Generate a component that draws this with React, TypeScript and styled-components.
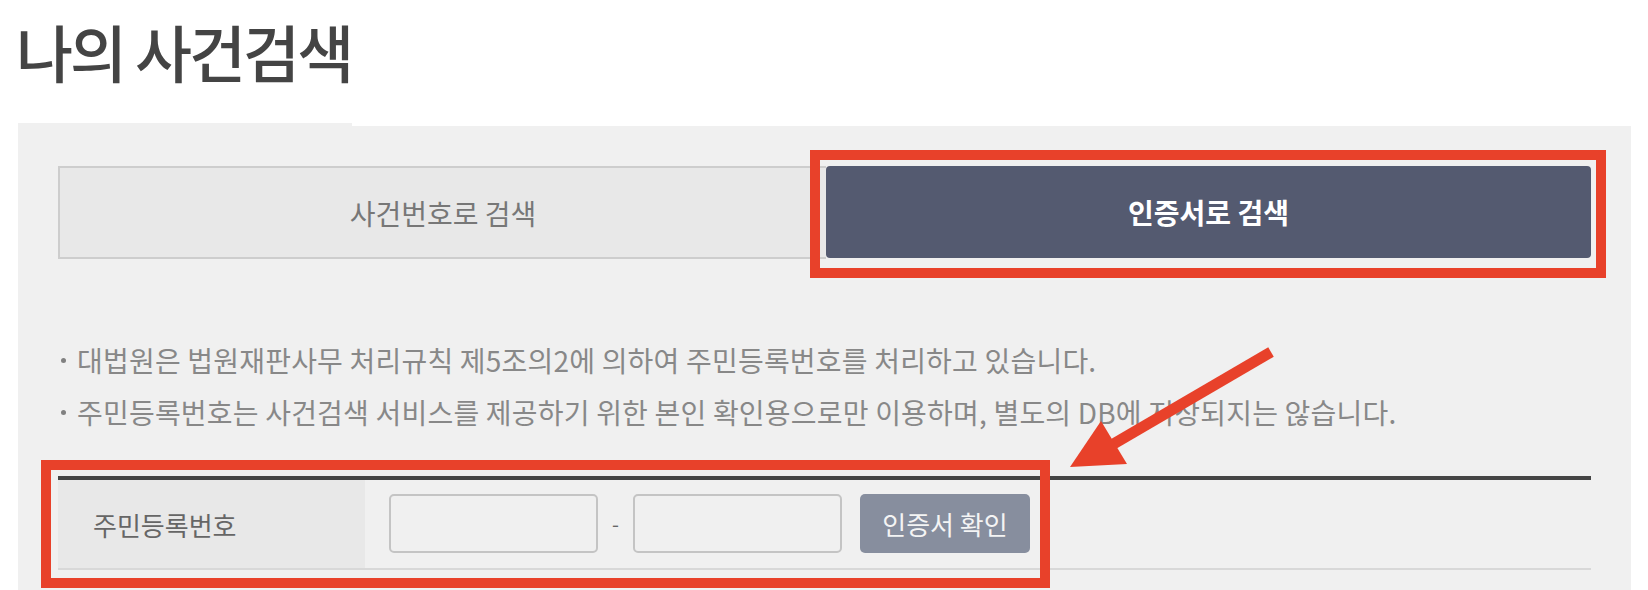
import React from "react";
import styled, { createGlobalStyle } from "styled-components";

const Global = createGlobalStyle`
  html, body { margin: 0; padding: 0; background: #fff; }
  body { font-family: "Noto Sans CJK KR", "Noto Sans", sans-serif; overflow: hidden; }
  * { box-sizing: border-box; }
`;

const Page = styled.div`
  position: relative;
  width: 1648px;
  height: 590px;
  overflow: hidden;
`;

const Title = styled.h1`
  margin: 0;
  padding: 11px 0 0 16px;
  height: 123px;
  font-size: 62px;
  font-weight: 500;
  letter-spacing: -3px;
  line-height: 80px;
  color: #444;
`;

const TitleStrip = styled.div`
  margin-left: 18px;
  width: 334px;
  height: 3px;
  background: #f0f0f0;
`;

const Panel = styled.section`
  margin-left: 18px;
  width: 1613px;
  height: 600px;
  background: #f0f0f0;
  padding: 40px 40px 0 40px;
`;

const Tabs = styled.div`
  display: grid;
  grid-template-columns: 768px 765px;
  height: 93px;
`;

const Tab = styled.button<{ $active?: boolean }>`
  font-family: inherit;
  font-size: 28px;
  font-weight: ${(p) => (p.$active ? 700 : 400)};
  color: ${(p) => (p.$active ? "#fff" : "#777")};
  background: ${(p) => (p.$active ? "#545a70" : "#e8e8e8")};
  border: ${(p) => (p.$active ? "none" : "2px solid #cdcdcd")};
  border-right: none;
  border-radius: ${(p) => (p.$active ? "4px" : "0")};
  height: ${(p) => (p.$active ? "92px" : "93px")};
  padding: 0;
  cursor: pointer;
`;

const Notes = styled.ul`
  list-style: none;
  margin: 0;
  padding: 75px 0 0 3px;
  height: 217px;
`;

const Note = styled.li`
  position: relative;
  padding-left: 16px;
  font-size: 28px;
  line-height: 52px;
  height: 52px;
  color: #888;
  letter-spacing: 0.2px;
  white-space: nowrap;
  &::before {
    content: "";
    position: absolute;
    left: 0;
    top: 24px;
    width: 5px;
    height: 5px;
    border-radius: 50%;
    background: #808080;
  }
`;

const FormTable = styled.div`
  width: 1533px;
  border-top: 4px solid #444;
  border-bottom: 2px solid #d8d8d8;
  display: flex;
  height: 94px;
`;

const LabelCell = styled.div`
  width: 307px;
  background: #e8e8e8;
  padding-left: 35px;
  display: flex;
  align-items: center;
  font-size: 26px;
  color: #666;
`;

const FieldCell = styled.div`
  display: flex;
  align-items: center;
  padding-left: 24px;
  padding-bottom: 2px;
`;

const Input = styled.input`
  width: 209px;
  height: 59px;
  border: 2px solid #c4c4c4;
  border-radius: 5px;
  background: #f0f0f0;
  outline: none;
`;

const Dash = styled.span`
  width: 35px;
  text-align: center;
  color: #666;
  font-size: 20px;
`;

const ConfirmButton = styled.button`
  margin-left: 18px;
  width: 170px;
  height: 59px;
  border: none;
  border-radius: 5px;
  background: #878e9e;
  color: #f4f4f4;
  font-family: inherit;
  font-size: 26px;
`;

const Annotation = styled.svg`
  position: absolute;
  left: 0;
  top: 0;
  pointer-events: none;
`;

export default function App() {
  return (
    <>
      <Global />
      <Page>
        <Title>나의 사건검색</Title>
        <TitleStrip />
        <Panel>
          <Tabs>
            <Tab>사건번호로 검색</Tab>
            <Tab $active>인증서로 검색</Tab>
          </Tabs>
          <Notes>
            <Note>대법원은 법원재판사무 처리규칙 제5조의2에 의하여 주민등록번호를 처리하고 있습니다.</Note>
            <Note>주민등록번호는 사건검색 서비스를 제공하기 위한 본인 확인용으로만 이용하며, 별도의 DB에 저장되지는 않습니다.</Note>
          </Notes>
          <FormTable>
            <LabelCell>주민등록번호</LabelCell>
            <FieldCell>
              <Input aria-label="주민등록번호 앞자리" />
              <Dash>-</Dash>
              <Input aria-label="주민등록번호 뒷자리" />
              <ConfirmButton>인증서 확인</ConfirmButton>
            </FieldCell>
          </FormTable>
        </Panel>
        <Annotation width="1648" height="590" viewBox="0 0 1648 590">
          <rect x="815" y="155" width="786" height="118" fill="none" stroke="#e8412a" strokeWidth="10" />
          <rect x="46" y="465" width="999" height="118" fill="none" stroke="#e8412a" strokeWidth="10" />
          <line x1="1271" y1="352" x2="1110" y2="446" stroke="#e8412a" strokeWidth="11" />
          <polygon points="1070,467 1101,421 1127,464" fill="#e8412a" />
        </Annotation>
      </Page>
    </>
  );
}
